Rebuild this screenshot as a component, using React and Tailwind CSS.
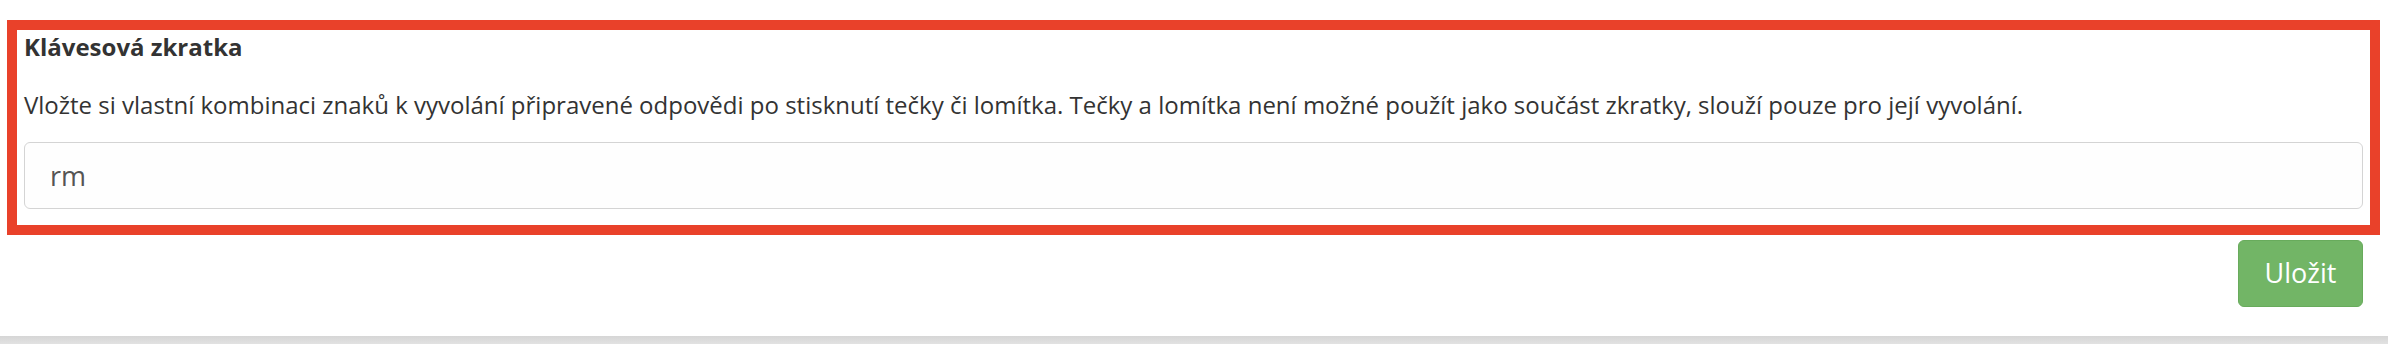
import React from "react";

export default function App() {
  return (
    <div className="w-full h-[344px] bg-white flex flex-col font-['Open_Sans',sans-serif] text-[#333]">
      <div className="flex-1 pt-[20px] bg-white">
        <div className="ml-[7px] mr-[8px] border-[10px] border-[#e9412a] px-[7px] pt-0 pb-[16px]">
          <div className="font-bold text-[24px] leading-[34px]">Klávesová zkratka</div>
          <p className="mt-[24px] text-[24px] leading-[34px]">
            Vložte si vlastní kombinaci znaků k vyvolání připravené odpovědi po stisknutí tečky či lomítka. Tečky a lomítka není možné použít jako součást zkratky, slouží pouze pro její vyvolání.
          </p>
          <input
            defaultValue="rm"
            readOnly
            className="mt-[20px] block w-full h-[67px] border border-[#d4d4d4] rounded-[6px] bg-[#fefefe] px-[25px] text-[27px] text-[#555] font-['Open_Sans',sans-serif] outline-none"
          />
        </div>
        <div className="flex justify-end pr-[25px] mt-[5px]">
          <button className="h-[67px] w-[125px] rounded-[6px] bg-[#72b566] border border-[#68ab5c] text-white text-[27px] font-['Open_Sans',sans-serif]">
            Uložit
          </button>
        </div>
      </div>
      <div className="h-[8px] bg-gradient-to-b from-[#d6d6d6] to-[#e2e2e2]" />
    </div>
  );
}
